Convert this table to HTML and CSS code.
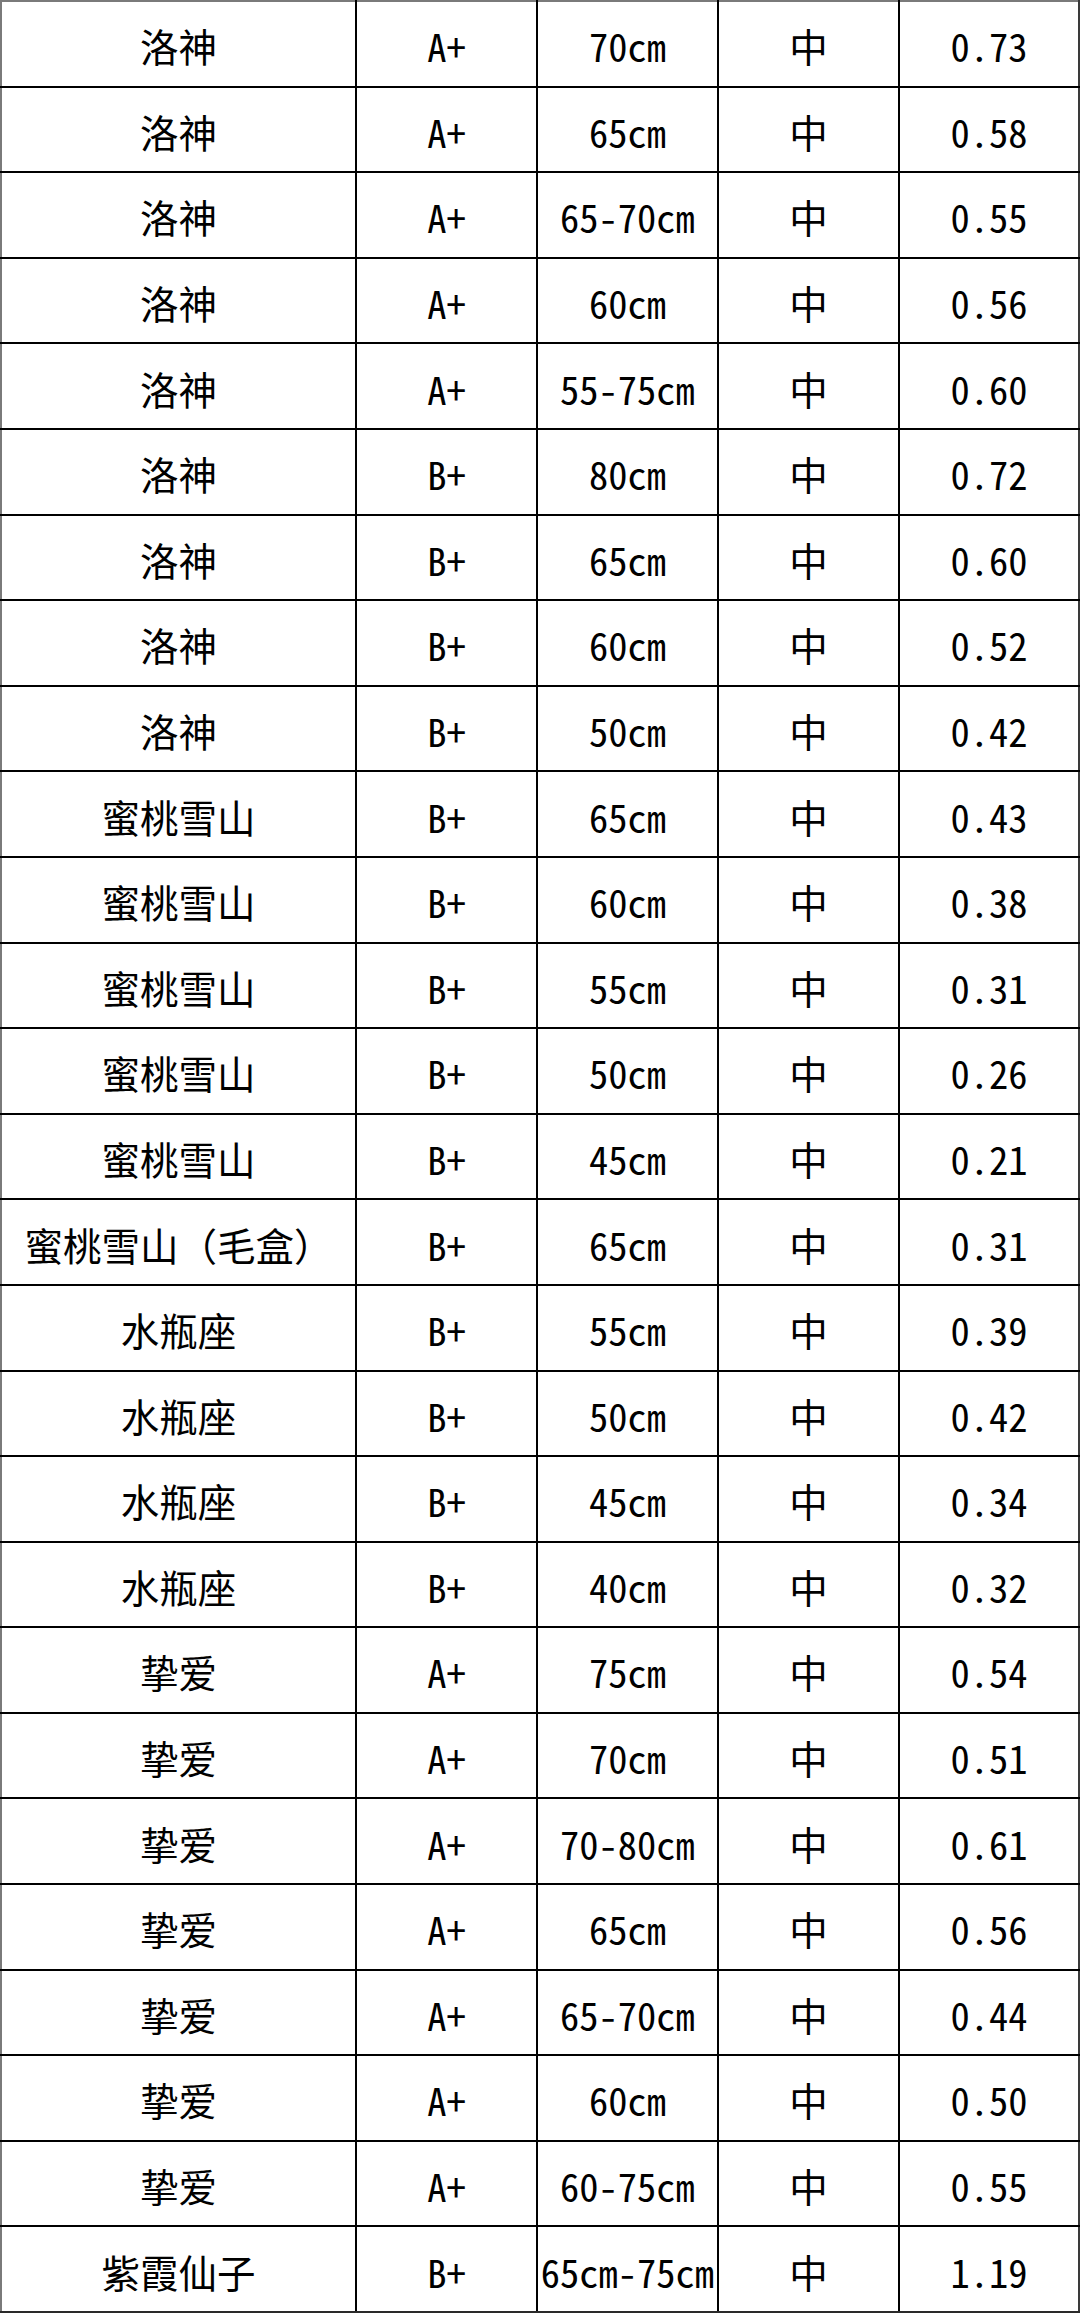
FILE: index.html
```html
<!DOCTYPE html>
<html lang="zh-CN">
<head>
<meta charset="utf-8">
<title>价格表</title>
<link rel="stylesheet" href="styles.css">
</head>
<body>
<table class="sheet">
<colgroup>
<col class="c1"><col class="c2"><col class="c3"><col class="c4"><col class="c5">
</colgroup>
<tbody>
<tr><td>洛神</td><td>A+</td><td>70cm</td><td>中</td><td>0.73</td></tr>
<tr><td>洛神</td><td>A+</td><td>65cm</td><td>中</td><td>0.58</td></tr>
<tr><td>洛神</td><td>A+</td><td>65-70cm</td><td>中</td><td>0.55</td></tr>
<tr><td>洛神</td><td>A+</td><td>60cm</td><td>中</td><td>0.56</td></tr>
<tr><td>洛神</td><td>A+</td><td>55-75cm</td><td>中</td><td>0.60</td></tr>
<tr><td>洛神</td><td>B+</td><td>80cm</td><td>中</td><td>0.72</td></tr>
<tr><td>洛神</td><td>B+</td><td>65cm</td><td>中</td><td>0.60</td></tr>
<tr><td>洛神</td><td>B+</td><td>60cm</td><td>中</td><td>0.52</td></tr>
<tr><td>洛神</td><td>B+</td><td>50cm</td><td>中</td><td>0.42</td></tr>
<tr><td>蜜桃雪山</td><td>B+</td><td>65cm</td><td>中</td><td>0.43</td></tr>
<tr><td>蜜桃雪山</td><td>B+</td><td>60cm</td><td>中</td><td>0.38</td></tr>
<tr><td>蜜桃雪山</td><td>B+</td><td>55cm</td><td>中</td><td>0.31</td></tr>
<tr><td>蜜桃雪山</td><td>B+</td><td>50cm</td><td>中</td><td>0.26</td></tr>
<tr><td>蜜桃雪山</td><td>B+</td><td>45cm</td><td>中</td><td>0.21</td></tr>
<tr><td>蜜桃雪山（毛盒）</td><td>B+</td><td>65cm</td><td>中</td><td>0.31</td></tr>
<tr><td>水瓶座</td><td>B+</td><td>55cm</td><td>中</td><td>0.39</td></tr>
<tr><td>水瓶座</td><td>B+</td><td>50cm</td><td>中</td><td>0.42</td></tr>
<tr><td>水瓶座</td><td>B+</td><td>45cm</td><td>中</td><td>0.34</td></tr>
<tr><td>水瓶座</td><td>B+</td><td>40cm</td><td>中</td><td>0.32</td></tr>
<tr><td>挚爱</td><td>A+</td><td>75cm</td><td>中</td><td>0.54</td></tr>
<tr><td>挚爱</td><td>A+</td><td>70cm</td><td>中</td><td>0.51</td></tr>
<tr><td>挚爱</td><td>A+</td><td>70-80cm</td><td>中</td><td>0.61</td></tr>
<tr><td>挚爱</td><td>A+</td><td>65cm</td><td>中</td><td>0.56</td></tr>
<tr><td>挚爱</td><td>A+</td><td>65-70cm</td><td>中</td><td>0.44</td></tr>
<tr><td>挚爱</td><td>A+</td><td>60cm</td><td>中</td><td>0.50</td></tr>
<tr><td>挚爱</td><td>A+</td><td>60-75cm</td><td>中</td><td>0.55</td></tr>
<tr><td>紫霞仙子</td><td>B+</td><td>65cm-75cm</td><td>中</td><td>1.19</td></tr>
</tbody>
</table>
</body>
</html>
```

FILE: styles.css
```css
html, body {
  margin: 0;
  padding: 0;
  background: #ffffff;
}

.sheet {
  border-collapse: collapse;
  table-layout: fixed;
  width: 1078px;
  font-family: "Noto Sans Mono CJK SC", "Noto Sans CJK SC", "Liberation Sans", sans-serif;
  font-size: 38.5px;
  color: #000000;
  border: 2px solid #6e6e6e;
}

.c1 { width: 355px; }
.c2 { width: 181px; }
.c3 { width: 181px; }
.c4 { width: 181px; }
.c5 { width: 180px; }

.sheet tr {
  height: 85.6px;
}

.sheet td {
  border: 2px solid #000000;
  text-align: center;
  vertical-align: middle;
  padding: 3px 0 0 0;
  line-height: 1.2;
  white-space: nowrap;
  overflow: hidden;
}

.sheet tr:first-child td { border-top-color: #7a7a7a; }
.sheet td:first-child { border-left-color: #7a7a7a; }
.sheet td:last-child { border-right-color: #3a3a3a; }
.sheet tr:last-child td { border-bottom-color: #2a2a2a; }
```
